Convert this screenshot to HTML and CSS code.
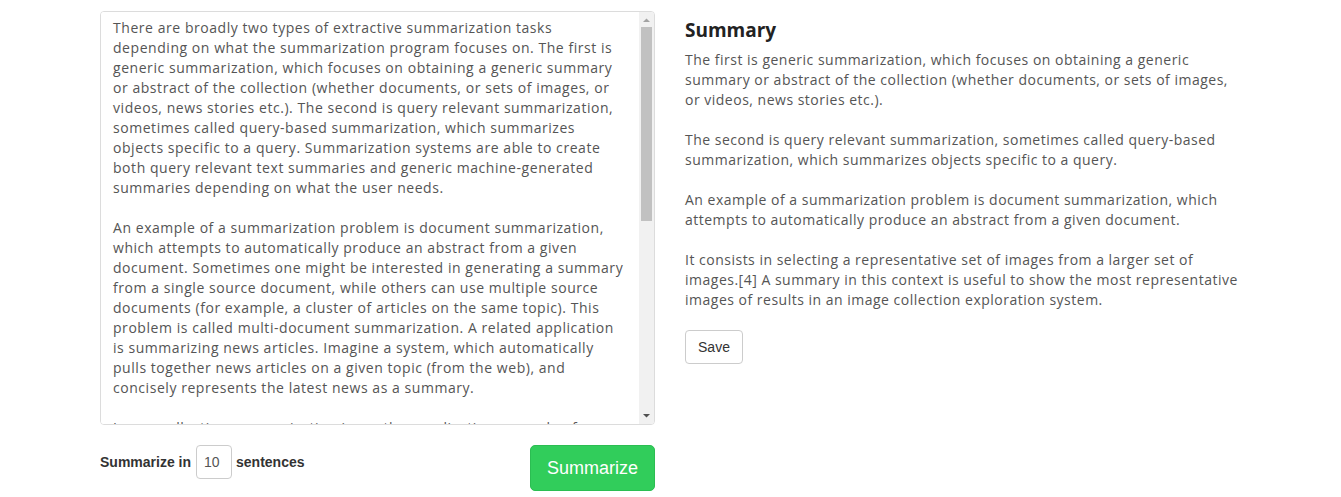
FILE: index.html
```html
<!DOCTYPE html>
<html>
<head>
<meta charset="utf-8">
<link rel="stylesheet" href="styles.css">
</head>
<body>
<div class="container">
  <div class="left">
    <div class="editor">
      <textarea class="source">There are broadly two types of extractive summarization tasks depending on what the summarization program focuses on. The first is generic summarization, which focuses on obtaining a generic summary or abstract of the collection (whether documents, or sets of images, or videos, news stories etc.). The second is query relevant summarization, sometimes called query-based summarization, which summarizes objects specific to a query. Summarization systems are able to create both query relevant text summaries and generic machine-generated summaries depending on what the user needs.

An example of a summarization problem is document summarization, which attempts to automatically produce an abstract from a given document. Sometimes one might be interested in generating a summary from a single source document, while others can use multiple source documents (for example, a cluster of articles on the same topic). This problem is called multi-document summarization. A related application is summarizing news articles. Imagine a system, which automatically pulls together news articles on a given topic (from the web), and concisely represents the latest news as a summary.

Image collection summarization is another application example of automatic summarization. It consists in selecting a representative set of images from a larger set of images.[4] A summary in this context is useful to show the most representative images of results in an image collection exploration system. Video summarization is a related domain, where the system automatically creates a trailer of a long video. This also has applications in consumer or personal videos, where one might want to skip the boring or repetitive actions. Similarly, in surveillance videos, one would want to extract important and suspicious activity, while ignoring all the boring and redundant frames captured.

At a very high level, summarization algorithms try to find subsets of objects (like set of sentences, or a set of images), which cover information of the entire set. This is also called the core-set. These algorithms model notions like diversity, coverage, information and representativeness of the summary.</textarea>
      <div class="scrollbar">
        <div class="sb-btn sb-up"><svg width="15" height="15" viewBox="0 0 15 15"><polygon points="4,10 11,10 7.5,6.5" fill="#a3a3a3"/></svg></div>
        <div class="sb-track"><div class="sb-thumb"></div></div>
        <div class="sb-btn sb-down"><svg width="15" height="15" viewBox="0 0 15 15"><polygon points="4,5 11,5 7.5,8.5" fill="#505050"/></svg></div>
      </div>
    </div>
    <div class="controls">
      <div class="count">
        <span class="label">Summarize in</span>
        <input class="num" type="text" value="10">
        <span class="label">sentences</span>
      </div>
      <button class="go">Summarize</button>
    </div>
  </div>
  <div class="right">
    <h2 class="title">Summary</h2>
    <p class="summary">The first is generic summarization, which focuses on obtaining a generic summary or abstract of the collection (whether documents, or sets of images, or videos, news stories etc.).<br><br>The second is query relevant summarization, sometimes called query-based summarization, which summarizes objects specific to a query.<br><br>An example of a summarization problem is document summarization, which attempts to automatically produce an abstract from a given document.<br><br>It consists in selecting a representative set of images from a larger set of images.[4] A summary in this context is useful to show the most representative images of results in an image collection exploration system.</p>
    <button class="save">Save</button>
  </div>
</div>
</body>
</html>
```

FILE: styles.css
```css
html, body {
  margin: 0;
  padding: 0;
  background: #fff;
}
body {
  font-family: "Open Sans", "DejaVu Sans", sans-serif;
  color: #555;
}
.container {
  width: 1141px;
  margin: 0 auto;
  padding-top: 11px;
  display: grid;
  grid-template-columns: 555px 556px;
  column-gap: 30px;
}
.editor {
  box-sizing: border-box;
  width: 555px;
  height: 414px;
  border: 1px solid #dcdcdc;
  border-radius: 4px;
  display: flex;
  overflow: hidden;
}
.source {
  flex: 1;
  display: block;
  box-sizing: border-box;
  height: 100%;
  margin: 0;
  padding: 6px 12px;
  border: none;
  font-family: "Open Sans", "DejaVu Sans", sans-serif;
  font-size: 14px;
  line-height: 20px;
  letter-spacing: 0.55px;
  color: #555;
  resize: none;
  outline: none;
  overflow: hidden;
  background: #fff;
}
.scrollbar {
  width: 15px;
  flex: none;
  background: #f1f1f1;
  display: flex;
  flex-direction: column;
}
.sb-btn {
  height: 15px;
  flex: none;
}
.sb-btn svg {
  display: block;
}
.sb-track {
  flex: 1;
}
.sb-thumb {
  height: 194px;
  margin: 0 2px;
  background: #c1c1c1;
}
.controls {
  margin-top: 20px;
  display: flex;
  justify-content: space-between;
  align-items: flex-start;
}
.count {
  display: flex;
  align-items: center;
  height: 34px;
}
.label {
  font-family: "Liberation Sans", Arial, sans-serif;
  font-weight: bold;
  font-size: 14px;
  color: #333;
}
.num {
  box-sizing: border-box;
  width: 36px;
  height: 34px;
  margin: 0 4px 0 5px;
  padding: 0 7px;
  border: 1px solid #ccc;
  border-radius: 4px;
  font-family: "Liberation Sans", Arial, sans-serif;
  font-size: 14px;
  color: #555;
  outline: none;
}
.go {
  box-sizing: border-box;
  width: 125px;
  height: 46px;
  border: 1px solid #2bbd52;
  border-radius: 5px;
  background: #31cd5b;
  color: #fff;
  font-family: "Liberation Sans", Arial, sans-serif;
  font-size: 18px;
  padding: 0;
}
.right {
  padding-top: 6px;
}
.title {
  margin: 0 0 7px 0;
  font-family: "Open Sans", "DejaVu Sans", sans-serif;
  font-weight: bold;
  font-size: 19px;
  line-height: 26px;
  color: #222;
}
.summary {
  margin: 0;
  font-size: 14px;
  line-height: 20px;
  letter-spacing: 0.5px;
  color: #555;
}
.save {
  margin-top: 20px;
  box-sizing: border-box;
  width: 58px;
  height: 34px;
  border: 1px solid #ccc;
  border-radius: 4px;
  background: #fff;
  color: #333;
  font-family: "Liberation Sans", Arial, sans-serif;
  font-size: 14px;
  padding: 0;
}
```
